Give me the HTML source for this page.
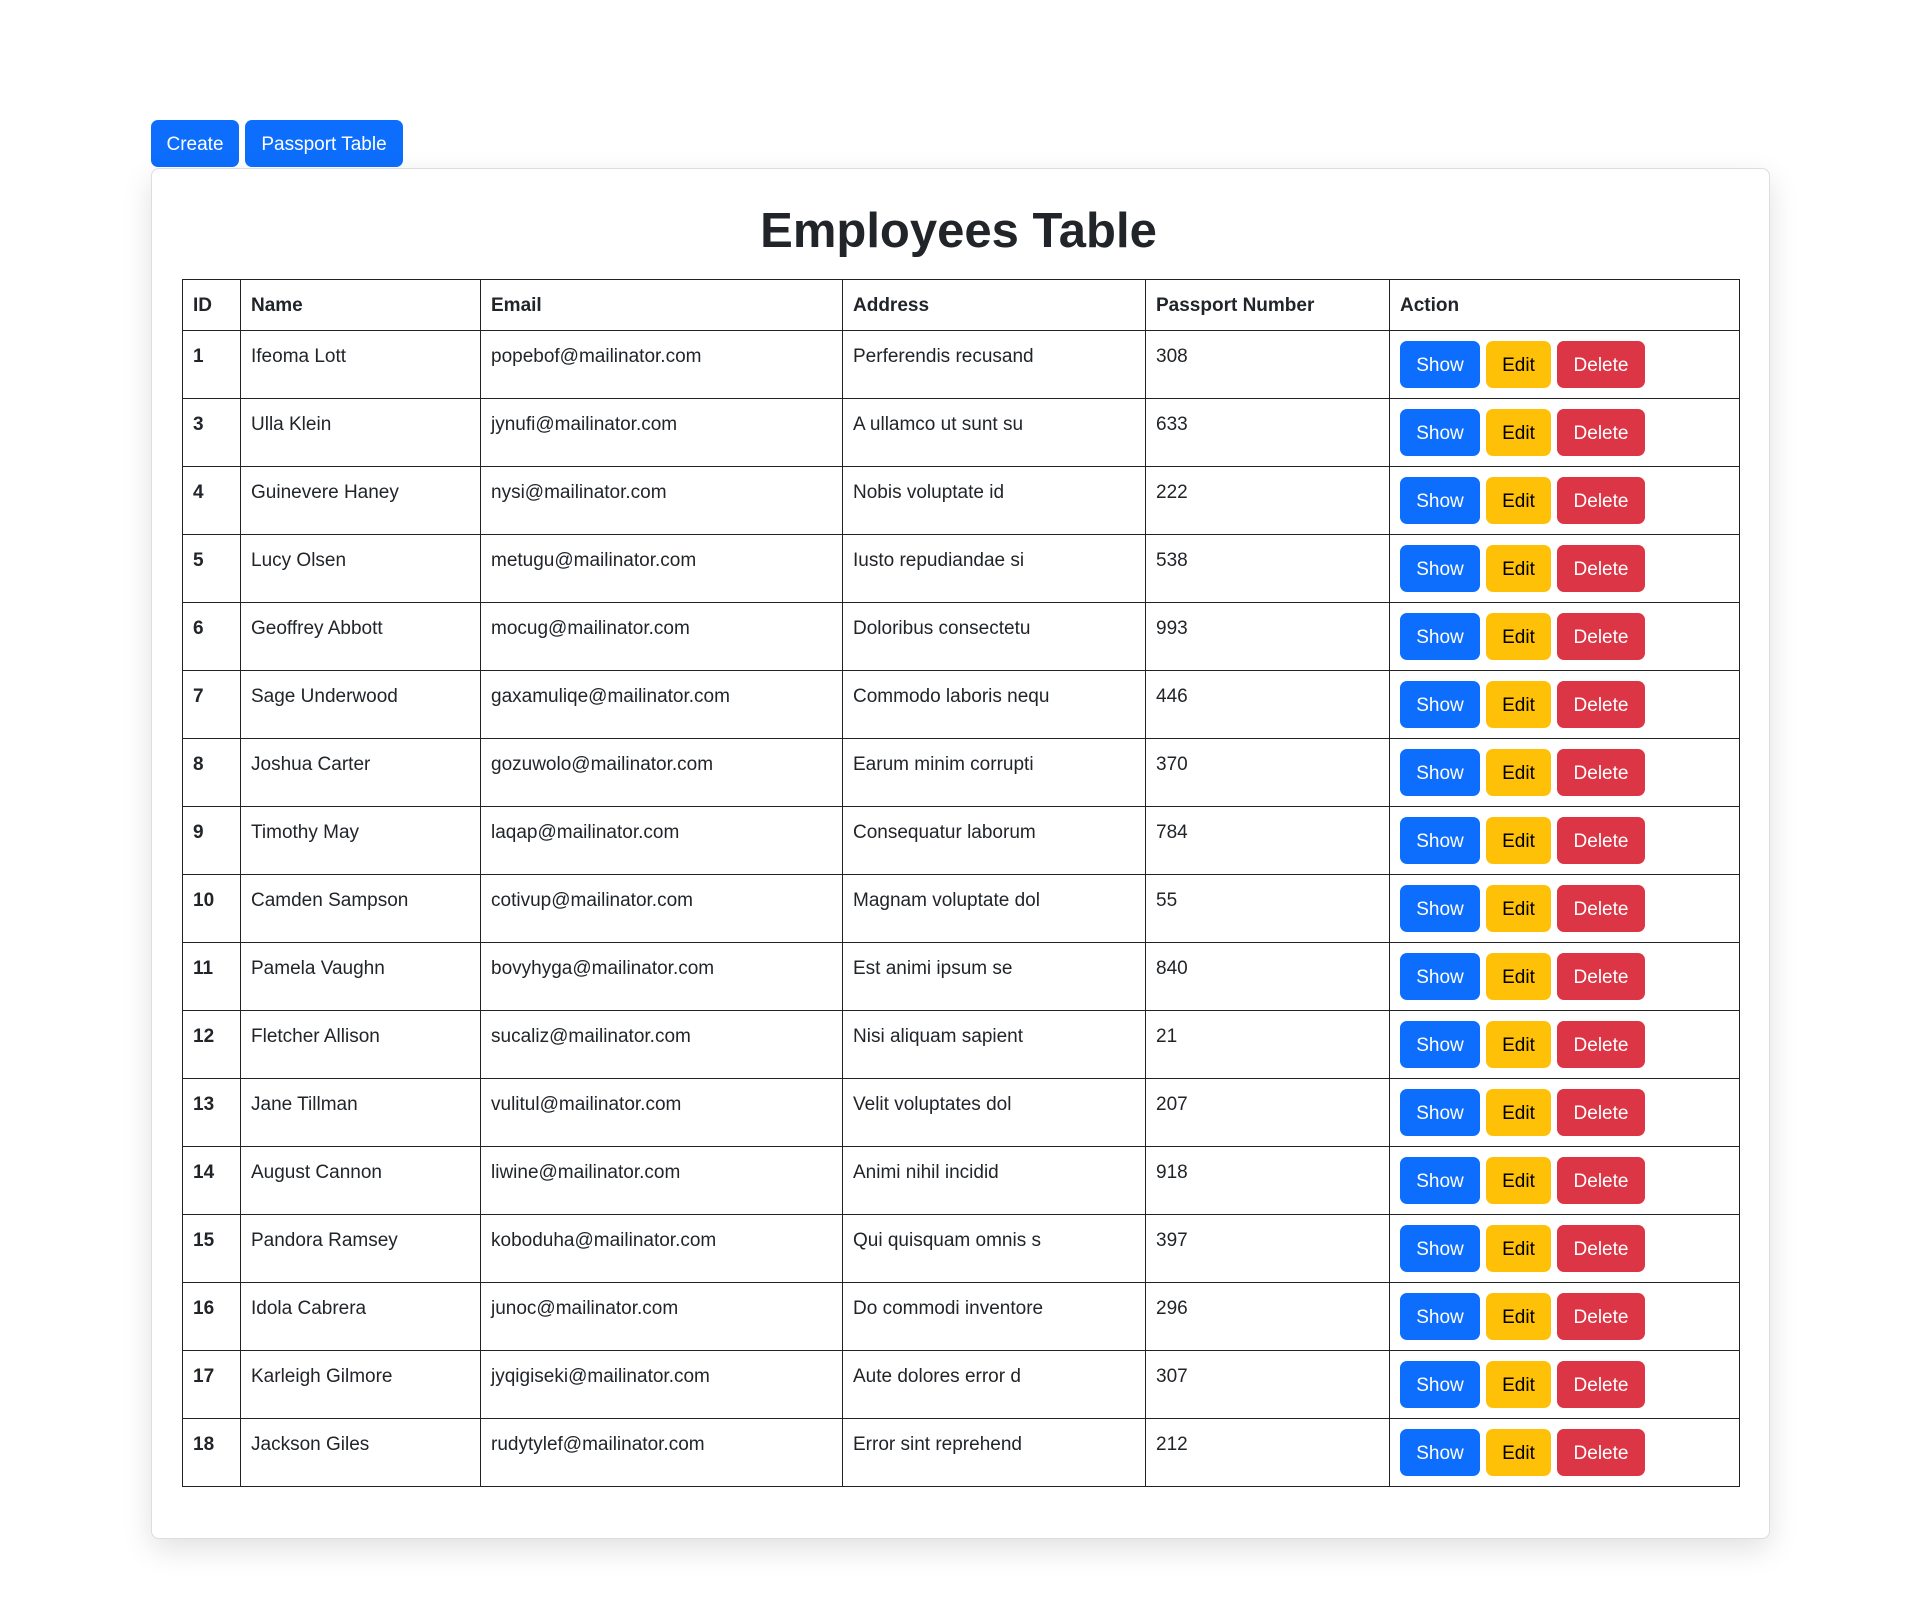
<!DOCTYPE html>
<html><head><meta charset="utf-8"><style>
*{box-sizing:border-box}
body{margin:0;width:1920px;height:1597px;background:#fff;font-family:"Liberation Sans",sans-serif;color:#212529;font-size:19px;position:relative}
.btn{display:inline-block;height:47px;line-height:49px;border-radius:7px;color:#fff;font-size:19px;text-align:center;position:absolute}
.b{background:#0d6efd}.y{background:#ffc107;color:#000}.r{background:#dc3545}
.card{position:absolute;left:151px;top:168px;width:1619px;height:1371px;border:1px solid #ddd;border-radius:8px;box-shadow:0 10px 30px rgba(0,0,0,.12);background:#fff}
h1{position:absolute;left:0;right:0;top:201px;margin:0;text-align:center;font-size:49px;line-height:60px;font-weight:bold;padding-right:3px}
table{position:absolute;left:182px;top:279px;width:1558px;border-collapse:collapse}
td,th{border:1.5px solid #222;padding:10px 10px;vertical-align:top;text-align:left;line-height:29px;font-size:19px}
th{height:51px;padding-top:11px}
tr.d{height:68px}
td{padding:11px 10px 0}
td:first-child{font-weight:bold}
td.a{padding:10px 10px 0}
.a span{display:inline-block;height:47px;line-height:49px;border-radius:7px;color:#fff;text-align:center;margin-right:6px;vertical-align:top}
</style></head><body>
<div class="btn b" style="left:151px;top:120px;width:88px">Create</div>
<div class="btn b" style="left:245px;top:120px;width:158px">Passport Table</div>
<div class="card"></div>
<h1>Employees Table</h1>
<table>
<colgroup><col style="width:58px"><col style="width:240px"><col style="width:362px"><col style="width:303px"><col style="width:244px"><col></colgroup>
<tr><th>ID</th><th>Name</th><th>Email</th><th>Address</th><th>Passport Number</th><th>Action</th></tr>
<tr class="d"><td>1</td><td>Ifeoma Lott</td><td>popebof@mailinator.com</td><td>Perferendis recusand</td><td>308</td><td class="a"><span class="b" style="width:80px">Show</span><span class="y" style="width:65px;color:#000">Edit</span><span class="r" style="width:88px">Delete</span></td></tr>
<tr class="d"><td>3</td><td>Ulla Klein</td><td>jynufi@mailinator.com</td><td>A ullamco ut sunt su</td><td>633</td><td class="a"><span class="b" style="width:80px">Show</span><span class="y" style="width:65px;color:#000">Edit</span><span class="r" style="width:88px">Delete</span></td></tr>
<tr class="d"><td>4</td><td>Guinevere Haney</td><td>nysi@mailinator.com</td><td>Nobis voluptate id</td><td>222</td><td class="a"><span class="b" style="width:80px">Show</span><span class="y" style="width:65px;color:#000">Edit</span><span class="r" style="width:88px">Delete</span></td></tr>
<tr class="d"><td>5</td><td>Lucy Olsen</td><td>metugu@mailinator.com</td><td>Iusto repudiandae si</td><td>538</td><td class="a"><span class="b" style="width:80px">Show</span><span class="y" style="width:65px;color:#000">Edit</span><span class="r" style="width:88px">Delete</span></td></tr>
<tr class="d"><td>6</td><td>Geoffrey Abbott</td><td>mocug@mailinator.com</td><td>Doloribus consectetu</td><td>993</td><td class="a"><span class="b" style="width:80px">Show</span><span class="y" style="width:65px;color:#000">Edit</span><span class="r" style="width:88px">Delete</span></td></tr>
<tr class="d"><td>7</td><td>Sage Underwood</td><td>gaxamuliqe@mailinator.com</td><td>Commodo laboris nequ</td><td>446</td><td class="a"><span class="b" style="width:80px">Show</span><span class="y" style="width:65px;color:#000">Edit</span><span class="r" style="width:88px">Delete</span></td></tr>
<tr class="d"><td>8</td><td>Joshua Carter</td><td>gozuwolo@mailinator.com</td><td>Earum minim corrupti</td><td>370</td><td class="a"><span class="b" style="width:80px">Show</span><span class="y" style="width:65px;color:#000">Edit</span><span class="r" style="width:88px">Delete</span></td></tr>
<tr class="d"><td>9</td><td>Timothy May</td><td>laqap@mailinator.com</td><td>Consequatur laborum</td><td>784</td><td class="a"><span class="b" style="width:80px">Show</span><span class="y" style="width:65px;color:#000">Edit</span><span class="r" style="width:88px">Delete</span></td></tr>
<tr class="d"><td>10</td><td>Camden Sampson</td><td>cotivup@mailinator.com</td><td>Magnam voluptate dol</td><td>55</td><td class="a"><span class="b" style="width:80px">Show</span><span class="y" style="width:65px;color:#000">Edit</span><span class="r" style="width:88px">Delete</span></td></tr>
<tr class="d"><td>11</td><td>Pamela Vaughn</td><td>bovyhyga@mailinator.com</td><td>Est animi ipsum se</td><td>840</td><td class="a"><span class="b" style="width:80px">Show</span><span class="y" style="width:65px;color:#000">Edit</span><span class="r" style="width:88px">Delete</span></td></tr>
<tr class="d"><td>12</td><td>Fletcher Allison</td><td>sucaliz@mailinator.com</td><td>Nisi aliquam sapient</td><td>21</td><td class="a"><span class="b" style="width:80px">Show</span><span class="y" style="width:65px;color:#000">Edit</span><span class="r" style="width:88px">Delete</span></td></tr>
<tr class="d"><td>13</td><td>Jane Tillman</td><td>vulitul@mailinator.com</td><td>Velit voluptates dol</td><td>207</td><td class="a"><span class="b" style="width:80px">Show</span><span class="y" style="width:65px;color:#000">Edit</span><span class="r" style="width:88px">Delete</span></td></tr>
<tr class="d"><td>14</td><td>August Cannon</td><td>liwine@mailinator.com</td><td>Animi nihil incidid</td><td>918</td><td class="a"><span class="b" style="width:80px">Show</span><span class="y" style="width:65px;color:#000">Edit</span><span class="r" style="width:88px">Delete</span></td></tr>
<tr class="d"><td>15</td><td>Pandora Ramsey</td><td>koboduha@mailinator.com</td><td>Qui quisquam omnis s</td><td>397</td><td class="a"><span class="b" style="width:80px">Show</span><span class="y" style="width:65px;color:#000">Edit</span><span class="r" style="width:88px">Delete</span></td></tr>
<tr class="d"><td>16</td><td>Idola Cabrera</td><td>junoc@mailinator.com</td><td>Do commodi inventore</td><td>296</td><td class="a"><span class="b" style="width:80px">Show</span><span class="y" style="width:65px;color:#000">Edit</span><span class="r" style="width:88px">Delete</span></td></tr>
<tr class="d"><td>17</td><td>Karleigh Gilmore</td><td>jyqigiseki@mailinator.com</td><td>Aute dolores error d</td><td>307</td><td class="a"><span class="b" style="width:80px">Show</span><span class="y" style="width:65px;color:#000">Edit</span><span class="r" style="width:88px">Delete</span></td></tr>
<tr class="d"><td>18</td><td>Jackson Giles</td><td>rudytylef@mailinator.com</td><td>Error sint reprehend</td><td>212</td><td class="a"><span class="b" style="width:80px">Show</span><span class="y" style="width:65px;color:#000">Edit</span><span class="r" style="width:88px">Delete</span></td></tr>
</table>
</body></html>
